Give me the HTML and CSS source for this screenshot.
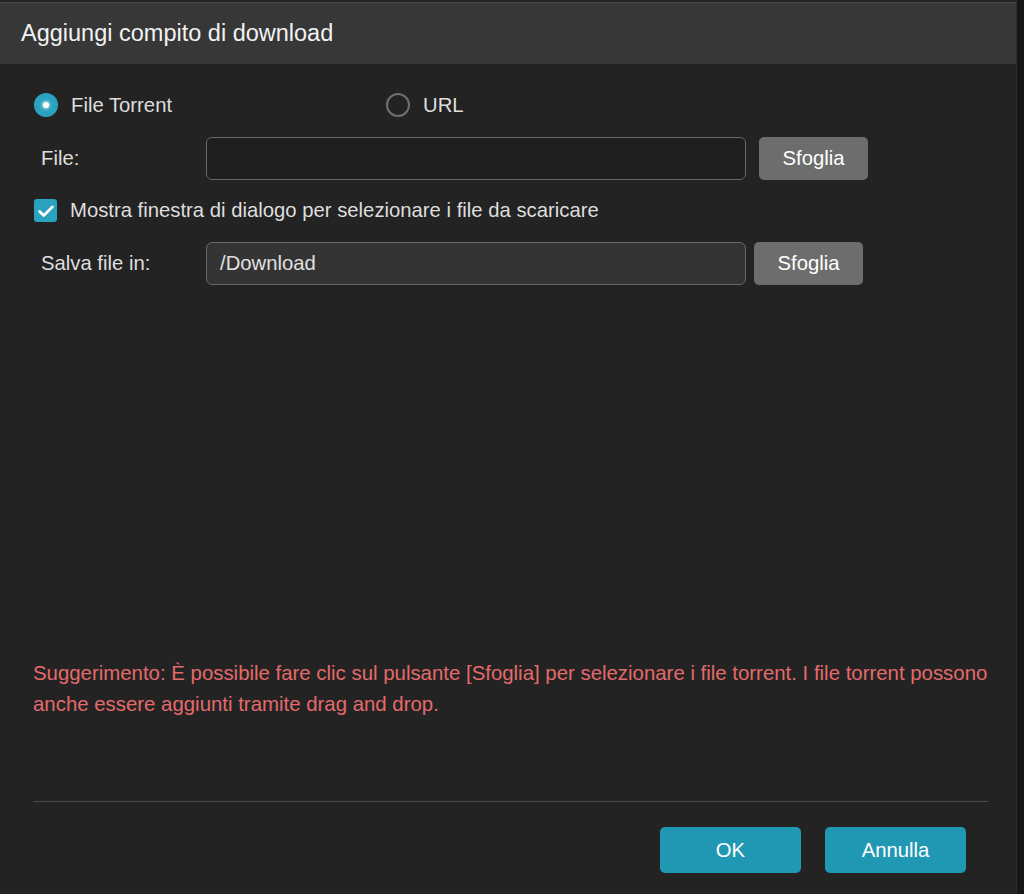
FILE: index.html
```html
<!DOCTYPE html>
<html lang="it">
<head>
<meta charset="utf-8">
<title>Aggiungi compito di download</title>
<link rel="stylesheet" href="styles.css">
</head>
<body>
<div class="dialog">
  <div class="header">Aggiungi compito di download</div>
  <div class="content">
    <div class="radios">
      <label class="option opt-first"><span class="radio checked"></span><span>File Torrent</span></label>
      <label class="option"><span class="radio"></span><span>URL</span></label>
    </div>
    <div class="row">
      <span class="label">File:</span>
      <div class="input"></div>
      <button class="btn-grey">Sfoglia</button>
    </div>
    <label class="check-row"><span class="checkbox"><svg viewBox="0 0 24 24" width="22" height="22"><path d="M5 12.5l4.5 4.5L19 7.5" fill="none" stroke="#fff" stroke-width="3" stroke-linecap="round" stroke-linejoin="round"/></svg></span><span>Mostra finestra di dialogo per selezionare i file da scaricare</span></label>
    <div class="row">
      <span class="label">Salva file in:</span>
      <div class="input filled">/Download</div>
      <button class="btn-grey btn-near">Sfoglia</button>
    </div>
    <p class="hint">Suggerimento: È possibile fare clic sul pulsante [Sfoglia] per selezionare i file torrent. I file torrent possono anche essere aggiunti tramite drag and drop.</p>
    <div class="separator"></div>
    <div class="footer">
      <button class="btn-primary">OK</button>
      <button class="btn-primary">Annulla</button>
    </div>
  </div>
</div>
</body>
</html>
```
FILE: styles.css
```css
* { box-sizing: border-box; }
html, body { margin: 0; padding: 0; }
body {
  background: #171717;
  font-family: "Liberation Sans", Arial, sans-serif;
  color: #e6e6e6;
  width: 1024px;
  height: 894px;
  overflow: hidden;
}
.dialog {
  width: 1017px;
  height: 894px;
  background: #232323;
  display: flex;
  flex-direction: column;
  border-right: 1px solid #2c2c2c;
}
.header {
  margin-top: 2px;
  height: 62px;
  background: #373737;
  border-top: 1px solid #4a4a4a;
  padding-left: 21px;
  display: flex;
  align-items: center;
  font-size: 23.5px;
  color: #f2f2f2;
}
.content {
  flex: 1;
  display: flex;
  flex-direction: column;
  padding: 29px 28px 21px 33px;
}
.radios {
  display: flex;
  align-items: center;
  height: 24px;
}
.option {
  display: flex;
  align-items: center;
  gap: 13px;
  font-size: 20.3px;
  color: #dedede;
}
.opt-first { width: 353px; padding-left: 1px; }
.radio {
  width: 24px;
  height: 24px;
  border-radius: 50%;
  border: 2.5px solid #6f6f6f;
  display: inline-block;
  position: relative;
}
.radio.checked {
  background: #2aa3c1;
  border: none;
}
.radio.checked::after {
  content: "";
  position: absolute;
  left: 9px;
  top: 9px;
  width: 6px;
  height: 6px;
  border-radius: 50%;
  background: #fff;
  box-shadow: 0 0 3px 1px rgba(255,255,255,0.6);
}
.row {
  display: flex;
  align-items: center;
  margin-top: 20px;
  height: 43px;
}
.label {
  width: 173px;
  padding-left: 8px;
  font-size: 20.3px;
  color: #dedede;
}
.input {
  width: 540px;
  height: 43px;
  border: 1.5px solid #676767;
  border-radius: 6px;
  background: #1f1f1f;
  font-size: 20.3px;
  color: #e0e0e0;
  display: flex;
  align-items: center;
  padding-left: 13px;
}
.input.filled { background: #343434; }
.btn-grey {
  margin-left: 13px;
  width: 109px;
  height: 43px;
  border: none;
  border-radius: 5px;
  background: #6d6d6d;
  color: #fff;
  font-family: inherit;
  font-size: 20.3px;
}
.btn-grey.btn-near { margin-left: 8px; }
.check-row {
  display: flex;
  align-items: center;
  gap: 13px;
  margin-top: 19px;
  height: 23px;
  padding-left: 1px;
  font-size: 20.3px;
  color: #dedede;
}
.checkbox {
  width: 23px;
  height: 23px;
  border-radius: 3px;
  background: #2aa3c1;
  display: flex;
  align-items: center;
  justify-content: center;
}
.hint {
  margin: auto 0 0 0;
  font-size: 20.4px;
  line-height: 31px;
  color: #e46a6b;
}
.separator {
  margin-top: 81px;
  height: 1px;
  background: #4a4a4a;
}
.footer {
  display: flex;
  justify-content: flex-end;
  gap: 24px;
  padding-top: 25px;
  padding-right: 22px;
}
.btn-primary {
  width: 141px;
  height: 46px;
  border: none;
  border-radius: 5px;
  background: #2198b3;
  color: #fff;
  font-family: inherit;
  font-size: 20.3px;
}
```
